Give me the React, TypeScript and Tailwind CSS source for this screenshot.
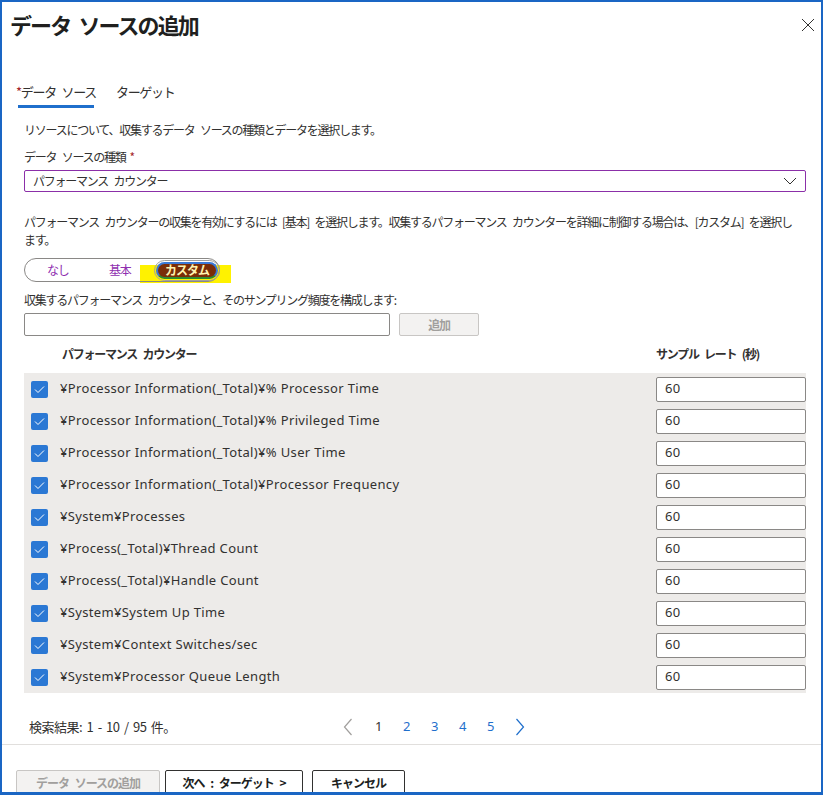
import React from 'react';

const counters = [
  '¥Processor Information(_Total)¥% Processor Time',
  '¥Processor Information(_Total)¥% Privileged Time',
  '¥Processor Information(_Total)¥% User Time',
  '¥Processor Information(_Total)¥Processor Frequency',
  '¥System¥Processes',
  '¥Process(_Total)¥Thread Count',
  '¥Process(_Total)¥Handle Count',
  '¥System¥System Up Time',
  '¥System¥Context Switches/sec',
  '¥System¥Processor Queue Length',
];

const jp = "font-['Noto_Sans_CJK_JP',sans-serif]";
const latin = "font-['Noto_Sans','Noto_Sans_CJK_JP',sans-serif]";

function Check() {
  return (
    <div className="w-[17px] h-[17px] rounded-[2px] bg-[#2b78d4] flex items-center justify-center">
      <svg width="11" height="9" viewBox="0 0 11 9" fill="none">
        <path d="M1 4.5 L4 7.5 L10 1.5" stroke="#ffffff" strokeWidth="1" />
      </svg>
    </div>
  );
}

function Chevron({ dir, color }: { dir: 'left' | 'right'; color: string }) {
  return (
    <svg width="10" height="18" viewBox="0 0 10 18" fill="none">
      {dir === 'left' ? (
        <path d="M8.5 1 L1.5 9 L8.5 17" stroke={color} strokeWidth="1.2" />
      ) : (
        <path d="M1.5 1 L8.5 9 L1.5 17" stroke={color} strokeWidth="1.2" />
      )}
    </svg>
  );
}

export default function App() {
  return (
    <div className={`w-[825px] h-[795px] bg-white overflow-hidden text-[#323130] ${jp} [word-spacing:4px]`}>
      <div className="w-[823px] h-[795px] border-2 border-b-[3px] border-[#1a66c4] flex flex-col overflow-hidden [&>*]:shrink-0">
        {/* title */}
        <div className="h-[44px] flex items-center justify-between pl-[8px] pr-[6px]">
          <h1 className="text-[22px] font-bold tracking-[-1.9px] [word-spacing:5px] text-[#201f1e]">データ ソースの追加</h1>
          <svg width="14" height="14" viewBox="0 0 14 14" className="mt-[2px]">
            <path d="M1 1 L13 13 M13 1 L1 13" stroke="#323130" strokeWidth="1" />
          </svg>
        </div>

        {/* tabs */}
        <div className="mt-[33px] pl-[14px] flex gap-[20px] text-[13px] tracking-[-1.3px]">
          <div className="flex flex-col">
            <div className="h-[26px] flex items-center">
              <span className="text-[#a4262c]">*</span>データ ソース
            </div>
            <div className="h-[3px] ml-[2px] mr-[2px] bg-[#1f6fcc]" />
          </div>
          <div className="h-[26px] flex items-center">ターゲット</div>
        </div>

        <div className="px-[22px] flex flex-col text-[12px] tracking-[-1.25px] [&>*]:shrink-0">
          <div className="mt-[12px] h-[20px] flex items-center">リソースについて、収集するデータ ソースの種類とデータを選択します。</div>
          <div className="mt-[7px] h-[20px] flex items-center">
            データ ソースの種類<span className="text-[#a4262c] ml-[4px]">*</span>
          </div>
          <div className="mt-[3px] h-[22px] w-[782px] border border-[#8b2fa8] rounded-[2px] flex items-center justify-between pl-[8px] pr-[8px]">
            <span>パフォーマンス カウンター</span>
            <svg width="14" height="8" viewBox="0 0 14 8" fill="none">
              <path d="M1 1 L7 7 L13 1" stroke="#323130" strokeWidth="1" />
            </svg>
          </div>
          <div className="mt-[21px] leading-[18px]">
            <div className="whitespace-nowrap">
              パフォーマンス カウンターの収集を有効にするには [基本] を選択します。収集するパフォーマンス カウンターを詳細に制御する場合は、[カスタム] を選択し
            </div>
            <div>ます。</div>
          </div>

          {/* toggle */}
          <div className="mt-[9px] h-[24px] relative">
            <div className="absolute left-[116px] top-[7px] w-[91px] h-[18px] bg-[#fff200]" />
            <div className="relative w-[196px] h-[24px] border border-[#8a8886] rounded-full flex items-center text-[#8f2fb0]">
              <span className="ml-[22px] w-[40px]">なし</span>
              <span className="ml-[22px] w-[40px]">基本</span>
              <span className="ml-auto mr-[-1px] h-[21px] w-[66px] rounded-full border border-[#a19f9d] p-[1px]">
                <span className="h-full w-full rounded-full border-2 border-[#3a78d6] border-b-[#2f8a2f] bg-[#7a2c08] text-[#fff3b0] font-bold flex items-center justify-center text-[12px] tracking-[-1px]">
                  カスタム
                </span>
              </span>
            </div>
          </div>

          <div className="mt-[8px] h-[20px] flex items-center">収集するパフォーマンス カウンターと、そのサンプリング頻度を構成します:</div>
          <div className="mt-[3px] flex gap-[9px]">
            <div className="w-[366px] h-[23px] border border-[#8a8886] rounded-[2px] bg-white" />
            <button className="w-[80px] h-[23px] border border-[#c8c6c4] rounded-[2px] bg-[#f3f2f1] text-[#a19f9d] font-bold">
              追加
            </button>
          </div>

          {/* table header */}
          <div className="mt-[8px] h-[20px] flex items-center font-bold text-[12px]">
            <span className="ml-[38px] w-[594px]">パフォーマンス カウンター</span>
            <span>サンプル レート (秒)</span>
          </div>

          {/* rows */}
          <div className={`mt-[9px] w-[782px] bg-[#edebe9] flex flex-col ${latin} tracking-[0.35px] [word-spacing:normal]`}>
            {counters.map((c) => (
              <div key={c} className="h-[32px] flex items-center">
                <div className="ml-[7px] w-[29px]">
                  <Check />
                </div>
                <span className="w-[596px] text-[13px] text-[#323130]">{c}</span>
                <div className="w-[150px] h-[25px] border border-[#8a8886] rounded-[2px] bg-white flex items-center pl-[8px] text-[13px]">
                  60
                </div>
              </div>
            ))}
          </div>

          {/* pagination */}
          <div className="mt-[24px] h-[20px] flex items-center text-[13px] tracking-normal">
            <span className="ml-[5px] w-[314px] text-[13px] tracking-[-0.5px] [word-spacing:2px]">
              検索結果: 1 - 10 / 95 件。
            </span>
            <div className={`flex items-center ${latin}`}>
              <Chevron dir="left" color="#a19f9d" />
              <span className="ml-[22px] w-[28px] text-[#323130]">1</span>
              <span className="w-[28px] text-[#1f6fcc]">2</span>
              <span className="w-[28px] text-[#1f6fcc]">3</span>
              <span className="w-[28px] text-[#1f6fcc]">4</span>
              <span className="w-[28px] text-[#1f6fcc]">5</span>
              <Chevron dir="right" color="#1f6fcc" />
            </div>
          </div>
        </div>

        <div className="mt-[7px] h-px bg-[#e1dfdd]" />

        {/* buttons */}
        <div className="mt-[25px] pl-[14px] flex gap-[5px] text-[12px] font-bold tracking-[-1px]">
          <button className="w-[144px] h-[26px] border border-[#c8c6c4] rounded-[2px] bg-[#f3f2f1] text-[#a19f9d] [word-spacing:4px]">
            データ ソースの追加
          </button>
          <button className="w-[138px] h-[26px] border border-[#323130] rounded-[2px] bg-white text-[#201f1e] [word-spacing:4px]">
            次へ : ターゲット &gt;
          </button>
          <button className="ml-[4px] w-[93px] h-[26px] border border-[#323130] rounded-[2px] bg-white text-[#201f1e]">
            キャンセル
          </button>
        </div>
      </div>
    </div>
  );
}
